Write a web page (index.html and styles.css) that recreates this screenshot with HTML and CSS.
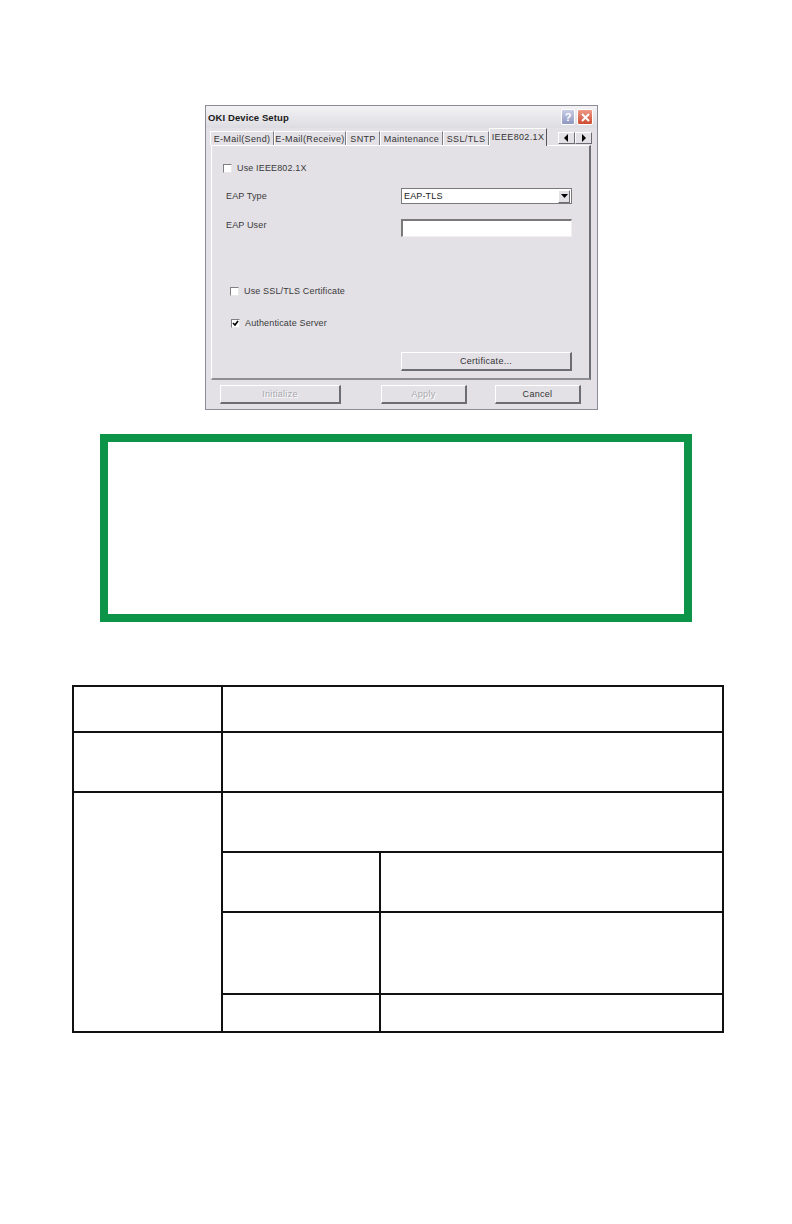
FILE: index.html
```html
<!DOCTYPE html>
<html>
<head>
<meta charset="utf-8">
<link rel="stylesheet" href="styles.css">
</head>
<body>
<div class="page">
  <div class="dialog">
    <div class="titlebar">
      <span class="title">OKI Device Setup</span>
      <div class="tbtns">
        <span class="tb help">?</span>
        <span class="tb close"><svg width="11" height="11" viewBox="0 0 11 11"><path d="M2 2L9 9M9 2L2 9" stroke="#fff" stroke-width="2"/></svg></span>
      </div>
    </div>
    <div class="tabs">
      <span class="tab w1">E-Mail(Send)</span>
      <span class="tab w2">E-Mail(Receive)</span>
      <span class="tab w3">SNTP</span>
      <span class="tab w4">Maintenance</span>
      <span class="tab w5">SSL/TLS</span>
      <span class="tab sel w6">IEEE802.1X</span>
      <span class="arrows">
        <span class="arr"><svg width="6" height="8" viewBox="0 0 6 8"><path d="M4 0L0 4L4 8Z" fill="#000"/></svg></span>
        <span class="arr"><svg width="6" height="8" viewBox="0 0 6 8"><path d="M1 0L5 4L1 8Z" fill="#000"/></svg></span>
      </span>
    </div>
    <div class="panel">
      <div class="row r1"><span class="cb"></span><span class="lbl">Use IEEE802.1X</span></div>
      <div class="row r2"><span class="flabel">EAP Type</span><span class="select"><span class="sv">EAP-TLS</span><span class="sbtn"><svg width="7" height="4" viewBox="0 0 7 4"><path d="M0 0H7L3.5 4Z" fill="#000"/></svg></span></span></div>
      <div class="row r3"><span class="flabel">EAP User</span><span class="input"></span></div>
      <div class="row r4"><span class="cb"></span><span class="lbl">Use SSL/TLS Certificate</span></div>
      <div class="row r5"><span class="cb"><svg width="7" height="7" viewBox="0 0 7 7"><path d="M1 3L3 5L6 1" stroke="#000" stroke-width="1.6" fill="none"/></svg></span><span class="lbl">Authenticate Server</span></div>
      <div class="row r6"><span class="btn cert">Certificate...</span></div>
    </div>
    <div class="btnrow">
      <span class="btn dis b1">Initialize</span>
      <span class="btn dis b2">Apply</span>
      <span class="btn b3">Cancel</span>
    </div>
  </div>

  <div class="greenbox"></div>

  <table class="grid">
    <colgroup><col class="c1"><col class="c2"><col class="c3"></colgroup>
    <tr class="h46"><td></td><td colspan="2"></td></tr>
    <tr class="h60"><td></td><td colspan="2"></td></tr>
    <tr class="h60"><td rowspan="4"></td><td colspan="2"></td></tr>
    <tr class="h60"><td></td><td></td></tr>
    <tr class="h82"><td></td><td></td></tr>
    <tr class="h38"><td></td><td></td></tr>
  </table>
</div>
</body>
</html>
```

FILE: styles.css
```css
html, body { margin: 0; padding: 0; background: #fff; }
.page { padding-top: 105px; font-family: "Liberation Sans", Arial, sans-serif; }

.dialog {
  margin-left: 205px;
  width: 391px;
  height: 303px;
  border: 1px solid #8c8c96;
  background: #e3e1e6;
  display: flex;
  flex-direction: column;
}
.titlebar {
  height: 22px;
  background: linear-gradient(#f3f3f5, #dcdce2);
  display: flex;
  align-items: center;
  justify-content: space-between;
  padding: 0 4px 0 2px;
}
.title { font-weight: bold; font-size: 9.5px; color: #1a1a1a; letter-spacing: 0.1px; }
.tbtns { display: flex; gap: 2px; }
.tb {
  width: 14px; height: 16px; border-radius: 2px;
  display: flex; align-items: center; justify-content: center;
  border: 1px solid #fff;
  box-sizing: border-box;
}
.help { background: linear-gradient(#c8cde6, #8f97c0); color: #fff; font-size: 11px; font-weight: bold; }
.close { width: 16px; background: linear-gradient(#ee9a86, #d04a32); }

.tabs {
  height: 17px;
  display: flex;
  align-items: flex-end;
  padding-left: 4px;
  font-size: 9px;
  color: #333;
  letter-spacing: 0.35px;
  position: relative;
}
.tab {
  height: 14px;
  box-sizing: border-box;
  border-left: 1px solid #fff;
  border-top: 1px solid #fff;
  border-right: 1px solid #7d7d86;
  display: flex; align-items: center; justify-content: center;
  white-space: nowrap;
}
.tab.sel {
  height: 18px;
  margin-bottom: -1px;
  background: #e3e1e6;
  border-right: 1px solid #55555c;
  position: relative; z-index: 2;
  padding-bottom: 2px;
}
.w1 { width: 64px; } .w2 { width: 72px; } .w3 { width: 34px; }
.w4 { width: 63px; } .w5 { width: 46px; } .w6 { width: 58px; }
.arrows { margin-left: 11px; display: flex; align-self: center; margin-top: 2px; }
.arr {
  width: 17px; height: 12px; box-sizing: border-box;
  border-top: 1px solid #fff; border-left: 1px solid #fff;
  border-right: 1px solid #6c6c74; border-bottom: 1px solid #6c6c74;
  display: flex; align-items: center; justify-content: center;
}

.panel {
  margin-left: 5px;
  width: 380px;
  height: 235px;
  box-sizing: border-box;
  border-top: 1px solid #fff;
  border-left: 1px solid #fff;
  border-right: 2px solid #6e6e76;
  border-bottom: 2px solid #8e8e96;
  font-size: 9px;
  color: #3a3a3a;
  letter-spacing: 0.15px;
  display: flex;
  flex-direction: column;
}
.row { display: flex; align-items: center; height: 16px; }
.r1 { margin-top: 14px; padding-left: 11px; }
.r2 { margin-top: 12px; padding-left: 14px; }
.r3 { margin-top: 15px; padding-left: 14px; height: 18px; align-items: flex-start; }
.r3 .flabel { line-height: 12px; }
.r4 { margin-top: 46px; padding-left: 18px; }
.r5 { margin-top: 16px; padding-left: 19px; }
.r6 { margin-top: 21px; padding-left: 189px; height: 19px; }
.flabel { width: 175px; }
.cb {
  width: 9px; height: 9px; box-sizing: border-box;
  background: #fff;
  border-top: 1px solid #808080; border-left: 1px solid #808080;
  border-right: 1px solid #e8e8e8; border-bottom: 1px solid #e8e8e8;
  margin-right: 5px;
  display: flex; align-items: center; justify-content: center;
}
.select {
  width: 171px; height: 16px; box-sizing: border-box;
  background: #fff;
  border: 1px solid #7a7a7a;
  display: flex; align-items: center; justify-content: space-between;
}
.sv { padding-left: 2px; color: #222; }
.sbtn {
  width: 12px; height: 13px; box-sizing: border-box;
  background: #e3e1e6;
  border-top: 1px solid #fff; border-left: 1px solid #fff;
  border-right: 1px solid #6c6c74; border-bottom: 1px solid #6c6c74;
  margin-right: 1px;
  display: flex; align-items: center; justify-content: center;
}
.input {
  width: 171px; height: 18px; box-sizing: border-box;
  background: #fff;
  border-top: 2px solid #7a7a7a; border-left: 2px solid #7a7a7a;
  border-right: 1px solid #f0f0f0; border-bottom: 1px solid #f0f0f0;
}
.btn {
  height: 19px; box-sizing: border-box;
  border-top: 1px solid #fff; border-left: 1px solid #fff;
  border-right: 2px solid #6c6c74; border-bottom: 2px solid #6c6c74;
  display: flex; align-items: center; justify-content: center;
  font-size: 9px; color: #333; letter-spacing: 0.3px;
  background: #e3e1e6;
}
.cert { width: 171px; }
.btnrow {
  display: flex;
  margin-top: 5px;
  padding-left: 14px;
}
.b1 { width: 121px; }
.b2 { width: 86px; margin-left: 40px; }
.b3 { width: 86px; margin-left: 28px; }
.dis { color: #a8a8ae; text-shadow: 1px 1px 0 #fff; }

.greenbox {
  margin: 24px 0 0 100px;
  width: 592px;
  height: 188px;
  box-sizing: border-box;
  border: 8px solid #0c9548;
}

.grid {
  margin: 63px 0 0 72px;
  width: 650px;
  table-layout: fixed;
  border-collapse: collapse;
}
.grid td { border: 2px solid #111; padding: 0; }
.c1 { width: 149px; } .c2 { width: 158px; } .c3 { width: 343px; }
.h46 { height: 46px; } .h60 { height: 60px; } .h82 { height: 82px; } .h38 { height: 38px; }
```
